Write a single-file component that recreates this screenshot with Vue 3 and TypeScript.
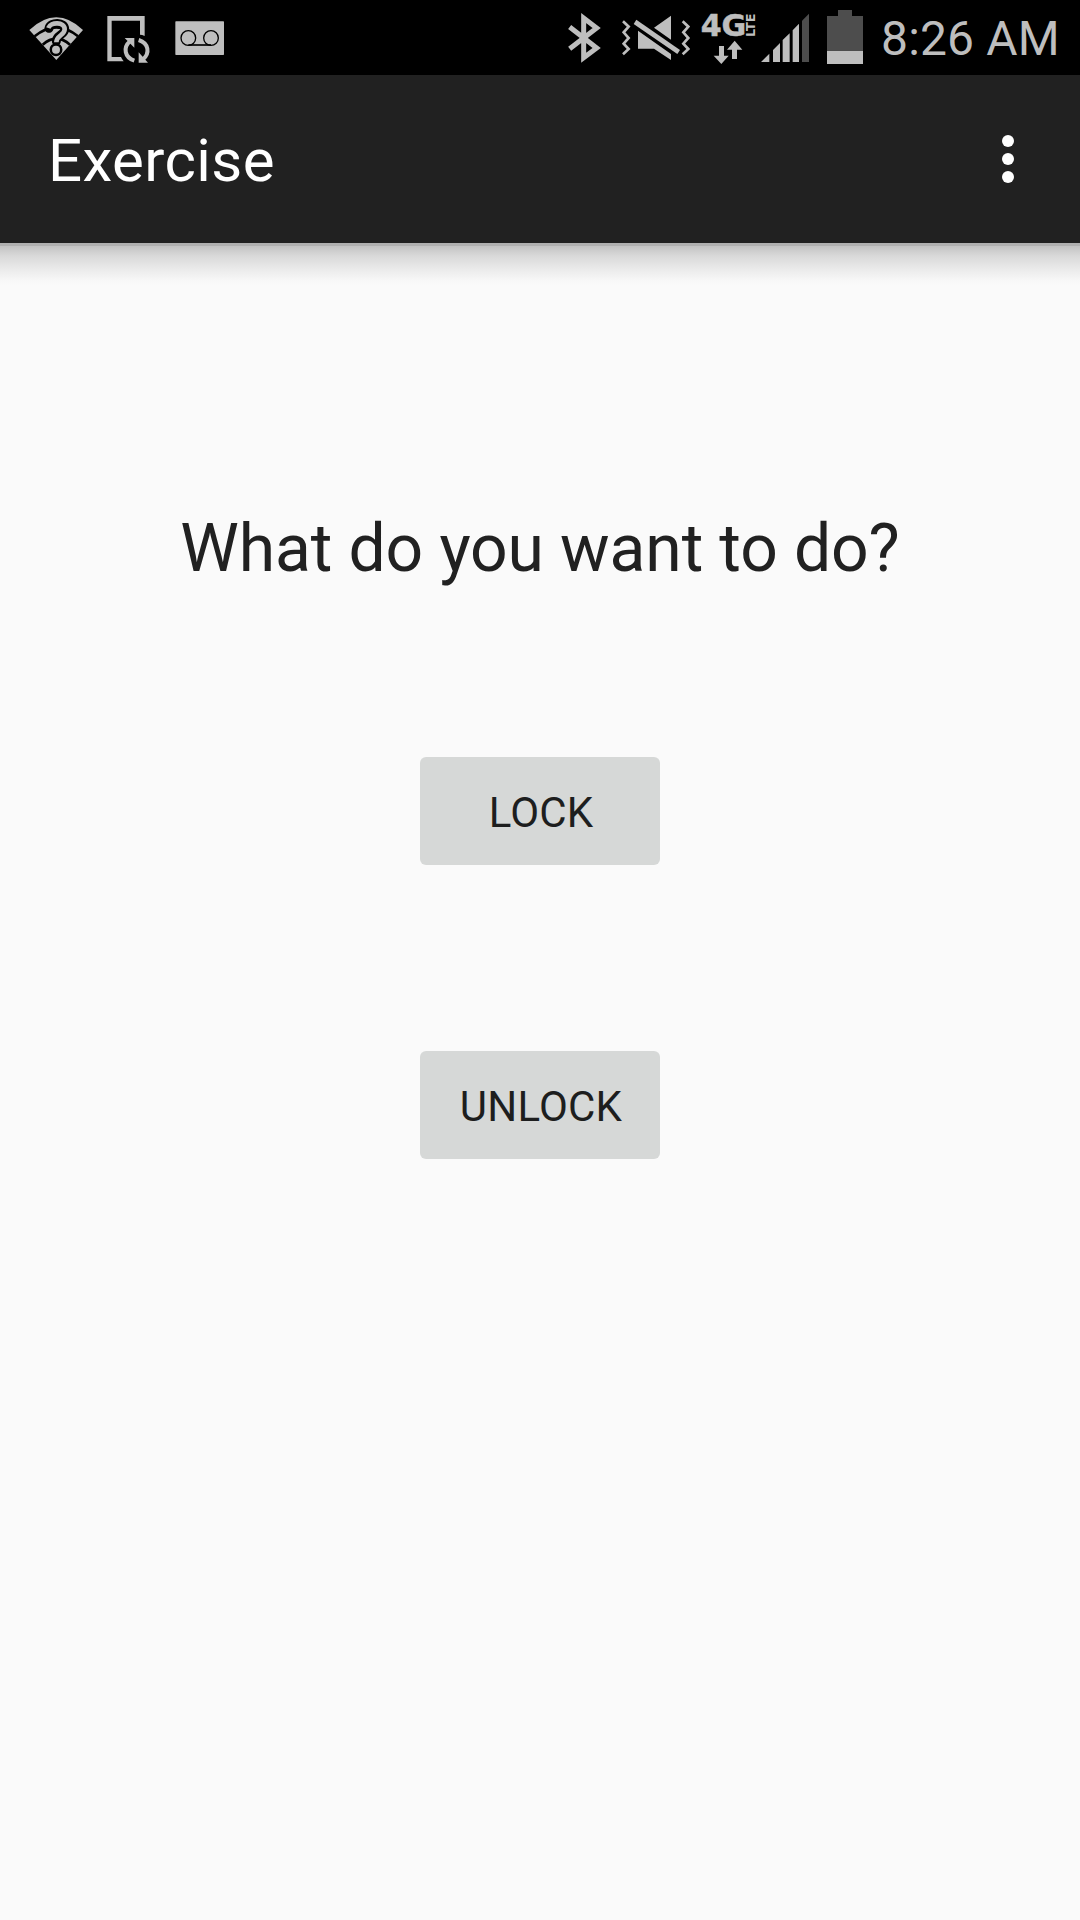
<script setup lang="ts">
const actions: string[] = ['LOCK', 'UNLOCK']
const dots: number[] = [1, 2, 3]
</script>

<template>
  <div class="screen">
    <div class="status">
      <svg class="wifi" width="55" height="75" viewBox="27 0 165 225">
        <path d="M28 90Q109 14 189 90L109 180Z" fill="#bebebe" />
        <path d="M44 109Q109 55 174 109M68 134Q109 98 150 134" fill="none" stroke="#000" stroke-width="8" />
        <g fill="none" stroke="#000" stroke-width="27" stroke-linecap="round">
          <path d="M87 85C92 65 134 65 134 88C134 105 109 105 109 124" />
          <path d="M108 149V149.1" stroke-width="39" />
        </g>
        <path d="M85 84C92 65 134 65 134 88C134 106 109 106 109 127" fill="none" stroke="#bebebe" stroke-width="14" />
        <circle cx="108" cy="149" r="12" fill="#bebebe" />
      </svg>
      <svg class="sync" width="44" height="75" viewBox="258 0 132 225">
        <path d="M262 48H374V108Q366 104 360 104V62H275V171H303Q306 178 311 184H262Z" fill="#bebebe" />
        <path d="M343 182C313 172 309 142 330 124M356 120C387 130 390 160 369 178" fill="none" stroke="#bebebe" stroke-width="12" />
        <path d="M314 114H343V143ZM356 157V188H384Z" fill="#bebebe" />
      </svg>
      <svg class="voicemail" width="49" height="75" viewBox="465 0 147 225">
        <rect x="466" y="64" width="146" height="101" rx="2" fill="#bebebe" />
        <g fill="none" stroke="#000" stroke-width="4">
          <circle cx="505" cy="114" r="22" /><circle cx="573" cy="114" r="22" />
          <path d="M505 135H573" stroke-width="5" />
        </g>
      </svg>
      <span class="spacer"></span>
      <svg class="bluetooth" width="34" height="75" viewBox="54 0 102 225">
        <path d="M59 81L140 144L101 173V54L140 84L59 146" fill="none" stroke="#bebebe" stroke-width="15" />
      </svg>
      <svg class="mute" width="70" height="75" viewBox="213 0 210 225">
        <g fill="#bebebe">
          <path d="M363 47V119L312 83ZM264 92L363 162V180L312 146H264Z" />
          <path d="M259 59L390 150L382 162L251 72Z" />
        </g>
        <path d="M219 64L236 80L221 97L236 114L221 131L236 147L219 163M398 64L415 80L400 97L415 114L400 131L415 147L398 163" fill="none" stroke="#bebebe" stroke-width="8" />
      </svg>
      <svg class="network" width="56" height="75" viewBox="30 0 168 225" fill="#bebebe">
        <text x="32" y="108" class="gen" textLength="137" lengthAdjust="spacingAndGlyphs">4G</text>
        <text transform="translate(194 111) rotate(-90)" class="lte" textLength="71" lengthAdjust="spacingAndGlyphs">LTE</text>
        <path d="M87 138H102V167H116L94 192L71 167H87ZM134 122L157 149H141V177H126V149H111Z" />
      </svg>
      <svg class="signal" width="49" height="75" viewBox="213 0 147 225">
        <path d="M213 186L238 161V186ZM249 150L270 129V186H249ZM278 120L299 100V186H278ZM308 91L327 71V186H308Z" fill="#bebebe" />
        <path d="M336 62L357 41V186H336Z" fill="#4d4d4d" />
      </svg>
      <svg class="battery" width="36" height="75" viewBox="411 0 108 225">
        <path d="M444 30H486V48H519V153H411V48H444Z" fill="#4d4d4d" />
        <path d="M411 153H519V192H411Z" fill="#bebebe" />
      </svg>
      <span class="clock">8:26 AM</span>
    </div>
    <header class="appbar">
      <h1>Exercise</h1>
      <div class="menu"><i v-for="d in dots" :key="d"></i></div>
    </header>
    <main>
      <p>What do you want to do?</p>
      <button v-for="a in actions" :key="a" type="button">{{ a }}</button>
    </main>
  </div>
</template>

<style>
body { background: #fafafa; }
</style>

<style scoped>
.screen {
  width: 1080px;
  height: 1920px;
  display: flex;
  flex-direction: column;
  background: #fafafa;
  font-family: Roboto, sans-serif;
  overflow: hidden;
}
.status {
  height: 75px;
  flex: none;
  display: flex;
  background: #000;
  padding-left: 29px;
}
.status svg { flex: none; display: block; overflow: visible; }
.sync { margin-left: 22px; }
.voicemail { margin-left: 25px; }
.spacer { flex: 1; }
.mute { margin-left: 19px; }
.network { margin-left: 9px; }
.signal { margin-left: 5px; }
.battery { margin-left: 17px; }
.gen {
  font: 700 90px "DejaVu Sans", sans-serif;
  stroke: #bebebe;
  stroke-width: 1.5px;
}
.lte { font: 700 37px "DejaVu Sans", sans-serif; }
.clock {
  width: 199px;
  margin-left: 18px;
  box-sizing: border-box;
  padding-top: 2px;
  font-size: 48px;
  line-height: 73px;
  letter-spacing: 0.15px;
  color: #bebebe;
  white-space: nowrap;
}
.appbar {
  height: 168px;
  flex: none;
  display: flex;
  justify-content: space-between;
  box-sizing: border-box;
  padding: 0 66px 0 48px;
  background: #212121;
}
h1 {
  margin: 0;
  padding-top: 4px;
  font-size: 60px;
  font-weight: 400;
  line-height: 163px;
  letter-spacing: 0.4px;
  color: #fff;
}
.menu {
  display: flex;
  flex-direction: column;
  gap: 6px;
  padding-top: 60px;
}
.menu i {
  width: 12px;
  height: 12px;
  border-radius: 50%;
  background: #fff;
}
main {
  flex: 1;
  display: flex;
  flex-direction: column;
  align-items: center;
  border-top: 3px solid #b0b0b0;
  background: linear-gradient(#c3c3c3, #d9d9d9 10px, #e9e9e9 22px, #f8f8f8 35px, #fafafa 40px);
}
p {
  margin: 263px 0 168px;
  font-size: 66px;
  line-height: 80px;
  letter-spacing: -0.12px;
  color: #212121;
  white-space: nowrap;
}
button {
  width: 240px;
  height: 108px;
  padding: 3px 0 0 2px;
  margin: 0 0 186px;
  border: 0;
  border-radius: 6px;
  background: #d6d8d7;
  font: 400 42px/105px Roboto, sans-serif;
  letter-spacing: 0.2px;
  color: #1d1e1e;
}
</style>
